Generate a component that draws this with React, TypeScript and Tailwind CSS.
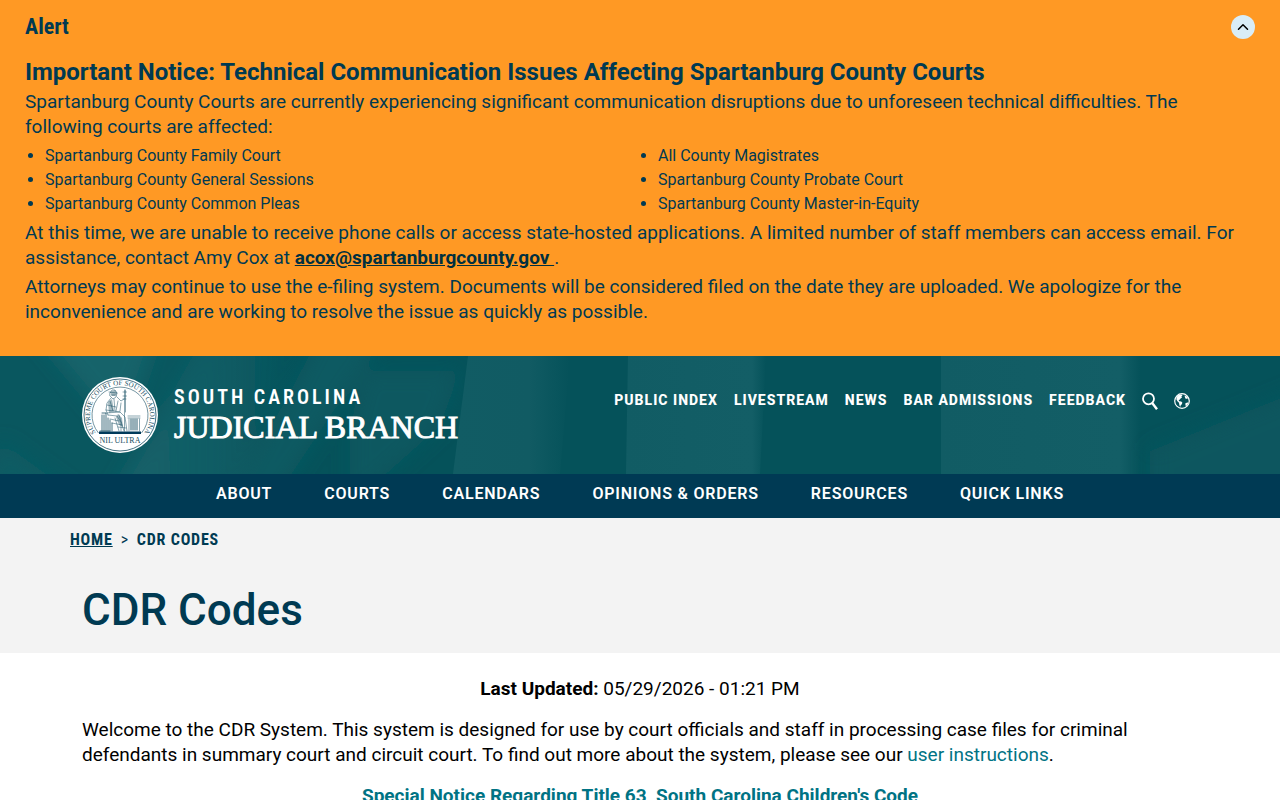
import { ChevronUp } from 'lucide-react';

const affectedCourts = [
  'Spartanburg County Family Court',
  'Spartanburg County General Sessions',
  'Spartanburg County Common Pleas',
  'All County Magistrates',
  'Spartanburg County Probate Court',
  'Spartanburg County Master-in-Equity',
];

const utilityLinks = ['Public Index', 'Livestream', 'News', 'Bar Admissions', 'Feedback'];

const mainLinks = ['About', 'Courts', 'Calendars', 'Opinions & Orders', 'Resources', 'Quick Links'];

function AlertBanner() {
  return (
    <section aria-labelledby="alert-title" className="bg-[#ff9924] px-[25px] pt-3.5 pb-8 text-[#003a52]">
      <div className="flex items-center justify-between">
        <h2 id="alert-title" className="font-['Roboto_Condensed','Roboto',sans-serif] text-[22px] leading-[26px] font-bold">Alert</h2>
        <button
          type="button"
          aria-label="Collapse alert"
          className="flex h-6 w-6 items-center justify-center rounded-full bg-[#d9edf7] text-black"
        >
          <ChevronUp className="h-[18px] w-[18px]" strokeWidth={2} />
        </button>
      </div>

      <h3 className="mt-[17px] text-2xl leading-[30px] font-bold">
        Important Notice: Technical Communication Issues Affecting Spartanburg County Courts
      </h3>
      <p className="mt-0.5 mb-[5px] text-[19px] leading-[25px]">
        Spartanburg County Courts are currently experiencing significant communication disruptions due to
        unforeseen technical difficulties. The following courts are affected:
      </p>
      <ul className="mb-1 list-disc gap-0 text-base sm:columns-2 sm:pr-1">
        {affectedCourts.map((court) => (
          <li key={court} className="ml-5">{court}</li>
        ))}
      </ul>
      <p className="mb-1 text-[19px] leading-[25px]">
        At this time, we are unable to receive phone calls or access state-hosted applications. A limited
        number of staff members can access email. For assistance, contact Amy Cox at{' '}
        <a href="mailto:acox@spartanburgcounty.gov" className="font-bold text-[#00303f] underline">
          acox@spartanburgcounty.gov&nbsp;
        </a>
        .
      </p>
      <p className="text-[19px] leading-[25px]">
        Attorneys may continue to use the e-filing system. Documents will be considered filed on the date
        they are uploaded. We apologize for the inconvenience and are working to resolve the issue as quickly
        as possible.
      </p>
    </section>
  );
}

function CourtSeal() {
  return (
    <svg viewBox="0 0 76 76" className="h-[76px] w-[76px] shrink-0" role="img" aria-label="Supreme Court of South Carolina seal">
      <defs>
        <path id="seal-arc" d="M18.7 61A30 30 0 1 1 57.3 61" />
      </defs>
      <circle cx="38" cy="38" r="38" fill="#fff" />
      <circle cx="38" cy="38" r="36" fill="none" stroke="#174e62" strokeWidth="0.8" />
      <path d="M16.500 56A28 28 0 1 1 59.500 56" fill="none" stroke="#174e62" strokeWidth="0.6" />
      <text fill="#174e62" className="font-['Liberation_Serif',serif] text-[7px]">
        <textPath href="#seal-arc" startOffset="50%" textAnchor="middle">
          SUPREME COURT OF SOUTH CAROLINA
        </textPath>
      </text>
      {/* seated figure with staff */}
      <g fill="none" stroke="#174e62" strokeWidth="0.5" strokeLinecap="round" strokeLinejoin="round">
        <path d="M42.500 13v41M43.500 13v22M41 15h3.500M41 19h3.500M41 22h3" />
        <path d="M28 16l2-3 3 0 2 3-1 4-3 2-3-3zM27 15l8 1M29 18l5 0" />
        <path d="M29 21l-4 5-1 7 2 5M35 20l4 4 3-2M39 26l-1 8M28 24l3 10M32 22l1 12M36 24l-2 10M25 28l9 2M24 33l14 2" />
        <path d="M24 36l14-1 5 5 2 14M26 38l9 1 4 6v9M33 41l4 13M37 38l5 16M28 42l9 2M30 46l10 2M36 50l8 1" />
        <path d="M20 36h4v18M20 38v16M22 38v16M26 41v13M28 43v11M30 46v8M18 54h10" strokeWidth="0.8" />
        <path d="M46 39h12M46 41h12M47 42v12M57.500 42v12" />
        <path d="M49 42v11M51 42v11M53 42v11M55 42v11" strokeWidth="0.9" />
      </g>
      <path d="M28 15l5-2 2 3-2 3-3 0zM26 25l4-3 2 12-5 2zM36 37l4 4 1 9-4-2-3-8z" fill="#174e62" opacity="0.4" />
      <path d="M17 54.500h42v2.500H17z" fill="#003a5a" />
      <text x="38" y="66" textAnchor="middle" fill="#174e62" className="font-['Liberation_Serif',serif] text-[8px]">
        NIL ULTRA
      </text>
    </svg>
  );
}

function HeaderBackdrop() {
  return (
    <svg
      aria-hidden="true"
      viewBox="0 0 1280 118"
      preserveAspectRatio="none"
      className="absolute inset-0 h-full w-full"
    >
      <defs>
        <linearGradient id="fade-right">
          <stop offset="0" stopColor="#17636b" />
          <stop offset="1" stopColor="#17636b" stopOpacity="0" />
        </linearGradient>
        <linearGradient id="band">
          <stop offset="0" stopColor="#115c64" />
          <stop offset="0.65" stopColor="#115b63" />
          <stop offset="1" stopColor="#115b63" stopOpacity="0" />
        </linearGradient>
        <linearGradient id="wide-band">
          <stop offset="0" stopColor="#115c64" />
          <stop offset="0.9" stopColor="#135e66" />
          <stop offset="1" stopColor="#135e66" stopOpacity="0" />
        </linearGradient>
        <linearGradient id="left-fade">
          <stop offset="0.7" stopColor="#09575f" />
          <stop offset="1" stopColor="#09575f" stopOpacity="0" />
        </linearGradient>
        <filter id="soften" filterUnits="userSpaceOnUse" x="-60" y="-60" width="1400" height="240">
          <feGaussianBlur stdDeviation="10" />
        </filter>
      </defs>
      <rect width="1280" height="118" fill="#05525a" />
      <rect width="300" height="118" fill="url(#left-fade)" />
      <g filter="url(#soften)">
        <path d="M30-30H160L140 30 105 60Z" fill="#18646b" />
        <path d="M0 85L90 150H-20Z" fill="#0f5b63" />
        <path d="M210-30H300L235 150H108Z" fill="url(#fade-right)" />
        <path d="M325-30H390L330 60 270 150H230Z" fill="#0e5a62" />
        <path d="M365 15H460L440 70 350 150V70Z" fill="#0a5860" />
        <path d="M1150 95L1310 30V150H1150Z" fill="#09565e" />
      </g>
      <path d="M468 0H570L560 118H453Z" fill="url(#band)" />
      <path d="M628 0H766L760 118H626Z" fill="url(#wide-band)" />
      <path d="M941 0H1140V118H941Z" fill="url(#wide-band)" />
    </svg>
  );
}

function SearchIcon() {
  return (
    <svg viewBox="0 0 16 18" className="h-[18px] w-4" fill="none" stroke="currentColor" aria-hidden="true">
      <circle cx="6.500" cy="6.800" r="5.500" strokeWidth="1.800" />
      <path d="M10.200 11L15 17.200" strokeWidth="2.400" />
    </svg>
  );
}

function GlobeIcon() {
  return (
    <svg viewBox="0 0 16 16" className="h-4 w-4" aria-hidden="true">
      <circle cx="8" cy="8" r="7.300" fill="none" stroke="currentColor" strokeWidth="1.200" />
      <path
        fill="currentColor"
        d="M2.500 4L4.500 2 7 1.400 8.600 2 7.400 3.600 8 4.600 6.600 5.600 5.600 6.800 4.600 7 5.200 8.200 7.200 8.600 8.400 9.800 7.600 11.400 6.600 12.400 6.200 14 5.400 12.200 5 9.800 3.400 8.200 2.400 6.400zM10.500 2.500L13 3.500 14.400 5.600 13 5.400 12 6 11.200 5zM11.400 10.200L13.400 9.400 14.400 9.800 13.400 12 12 13.200 11.400 12z"
      />
    </svg>
  );
}

function Header() {
  return (
    <header>
      <div className="relative bg-[#05525a] text-white">
        <HeaderBackdrop />
        <div className="relative mx-auto flex max-w-[1140px] items-start justify-between px-3 pt-[21px] pb-[21px]">
          <a href="/" className="flex items-center gap-4">
            <CourtSeal />
            <span className="flex flex-col whitespace-nowrap">
              <span className="font-['Roboto_Condensed','Roboto',sans-serif] text-xl leading-6 font-semibold tracking-[3px]">
                SOUTH CAROLINA
              </span>
              <span className="font-['Liberation_Serif',serif] text-[32px] leading-9 [-webkit-text-stroke:1px_white]">
                JUDICIAL BRANCH
              </span>
            </span>
          </a>
          <nav aria-label="Utility" className="pt-[13px] pr-2">
            <ul className="flex items-center gap-4 text-sm leading-5 font-extrabold tracking-[1px] whitespace-nowrap uppercase">
              {utilityLinks.map((link) => (
                <li key={link}>
                  <a href="#">{link}</a>
                </li>
              ))}
              <li className="flex pt-0.5">
                <button type="button" aria-label="Search">
                  <SearchIcon />
                </button>
              </li>
              <li className="flex pt-0.5">
                <button type="button" aria-label="Translate">
                  <GlobeIcon />
                </button>
              </li>
            </ul>
          </nav>
        </div>
      </div>
      <nav aria-label="Main" className="bg-[#003a54] pt-2 pb-3 text-white">
        <ul className="flex flex-wrap justify-center gap-x-[52px] font-semibold tracking-wider uppercase">
          {mainLinks.map((link) => (
            <li key={link}>
              <a href="#">{link}</a>
            </li>
          ))}
        </ul>
      </nav>
    </header>
  );
}

function PageTitle() {
  return (
    <div className="bg-[#f3f3f3] pt-2.5 pb-[15px] text-[#003a52]">
      <div className="mx-auto max-w-[1140px]">
        <nav aria-label="Breadcrumb">
          <ol className="flex gap-2 font-['Roboto_Condensed','Roboto',sans-serif] text-base font-bold tracking-wider uppercase">
            <li>
              <a href="/" className="underline">Home</a>
            </li>
            <li aria-hidden="true" className="font-normal">&gt;</li>
            <li aria-current="page">CDR Codes</li>
          </ol>
        </nav>
        <h1 className="mt-[31px] px-3 text-[44px] leading-[55px] font-medium">CDR Codes</h1>
      </div>
    </div>
  );
}

export default function App() {
  return (
    <div className="h-screen overflow-hidden bg-white font-['Roboto',sans-serif] text-black">
      <AlertBanner />
      <Header />
      <PageTitle />
      <main className="mx-auto max-w-[1140px] px-3 pt-[23px] text-[19px] leading-[25px]">
        <p className="mb-4 text-center">
          <strong>Last Updated:</strong> 05/29/2026 - 01:21 PM
        </p>
        <p className="mb-4">
          Welcome to the CDR System. This system is designed for use by court officials and staff in
          processing case files for criminal defendants in summary court and circuit court. To find out more
          about the system, please see our <a href="#" className="text-[#007384]">user instructions</a>.
        </p>
        <p className="text-center font-bold">
          <a href="#" className="text-[#007384]">Special Notice Regarding Title 63, South Carolina Children's Code</a>
        </p>
      </main>
    </div>
  );
}
